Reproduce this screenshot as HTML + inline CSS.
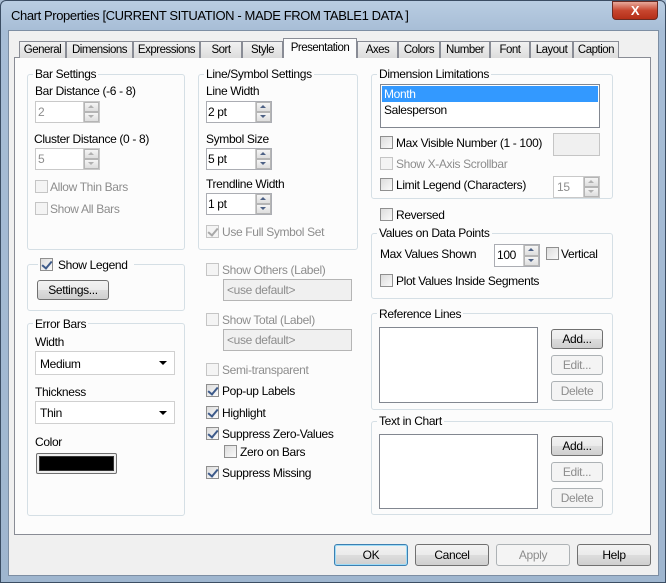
<!DOCTYPE html>
<html><head><meta charset="utf-8"><style>
*{box-sizing:border-box;margin:0;padding:0}
body{width:666px;height:583px;overflow:hidden;background:#a9bdd3;font-family:"Liberation Sans",sans-serif;font-size:12px;letter-spacing:-0.35px;color:#000;position:relative}
.a{position:absolute}
.frame{left:0;top:0;width:666px;height:583px;background:linear-gradient(180deg,#b9cde2 0,#a7bdd6 30px,#9fb6cf 100%);border:1px solid #3b4d63;border-radius:6px 6px 0 0}
.client{left:8px;top:30px;width:651px;height:546px;background:#f0f0f0;border:1px solid #7d8ea3}
.panel{left:14px;top:57px;width:637px;height:478px;background:#fcfcfc;border:1px solid #898c95}
.tab{top:41px;height:17px;background:linear-gradient(#f2f2f2,#dcdcdc);border:1px solid #898c95;border-bottom:none;font-size:11.5px;letter-spacing:-0.5px;text-align:center;line-height:16px;overflow:hidden}
.tab.act{top:38px;height:20px;background:#fcfcfc;z-index:2;line-height:18px}
.g{border:1px solid #d5dfe5;border-radius:3px}
.lg{background:#fcfcfc;padding:0 2px;line-height:12px}
.t{position:absolute;white-space:nowrap;line-height:14px}
.dis{color:#8d8d8d}
.cb{position:absolute;width:13px;height:13px;border:1px solid #8f8f8f;background:linear-gradient(135deg,#dcdcdc,#fafafa)}
.cb.d{border-color:#c5c5c5;background:#f4f4f4}
.cb.c::after{content:"";position:absolute;left:3px;top:0px;width:4px;height:8px;border:solid #3d5a8a;border-width:0 2px 2px 0;transform:rotate(40deg)}
.cb.c.d::after{border-color:#a8a8a8}
.box{position:absolute;background:#fff;border:1px solid #abadb3}
.spin{position:absolute;width:16px;right:0;top:0;bottom:0;border-left:1px solid #ccc}
.spin i{display:block;height:50%;border:1px solid #b5b5b5;background:linear-gradient(#f5f5f5,#dedede);position:relative}
.spin i::after{content:"";position:absolute;left:3px;border:3px solid transparent}
.spin i.u::after{border-bottom:3px solid #4d6185;top:-1px}
.spin i.dn::after{border-top:3px solid #4d6185;top:2px}
.spin i.ud::after{border-bottom:3px solid #b0b0b0;top:-1px}
.spin i.dd::after{border-top:3px solid #b0b0b0;top:2px}
.btn{position:absolute;border:1px solid #707070;border-radius:3px;background:linear-gradient(#f2f2f2 0,#ebebeb 50%,#dddddd 51%,#cfcfcf 100%);text-align:center;line-height:18px}
.btn.d{border-color:#adb2b5;background:#f4f4f4;color:#8d8d8d}
.combo::after{content:"";position:absolute;right:7px;top:9px;border:4px solid transparent;border-top:4px solid #000}
</style></head><body>
<div class="a frame"></div>
<div class="t" style="left:11px;top:9px;font-size:13px;letter-spacing:-0.4px">Chart Properties [CURRENT SITUATION - MADE FROM TABLE1 DATA ]</div>
<div class="a" style="left:612px;top:1px;width:46px;height:19px;border:1px solid #6b2b22;border-radius:0 0 4px 4px;background:linear-gradient(#e8a99b,#c7462f 50%,#b52f18);color:#fff;font-weight:bold;text-align:center;line-height:17px;font-size:13px">X</div>
<div class="a client"></div>
<div class="a panel"></div>
<div class="a tab" style="left:19px;width:47px">General</div>
<div class="a tab" style="left:66px;width:67px">Dimensions</div>
<div class="a tab" style="left:133px;width:67px">Expressions</div>
<div class="a tab" style="left:200px;width:42px">Sort</div>
<div class="a tab" style="left:242px;width:41px">Style</div>
<div class="a tab act" style="left:283px;width:74px">Presentation</div>
<div class="a tab" style="left:357px;width:41px">Axes</div>
<div class="a tab" style="left:398px;width:42px">Colors</div>
<div class="a tab" style="left:440px;width:50px">Number</div>
<div class="a tab" style="left:490px;width:40px">Font</div>
<div class="a tab" style="left:530px;width:43px">Layout</div>
<div class="a tab" style="left:573px;width:46px">Caption</div>

<div class="a g" style="left:27px;top:74px;width:158px;height:176px"></div>
<div class="t lg" style="left:33px;top:67px">Bar Settings</div>
<div class="t" style="left:35px;top:84px">Bar Distance (-6 - 8)</div>
<div class="box" style="left:35px;top:101px;width:65px;height:22px;border-color:#c9c9c9"><span class="t dis" style="left:2px;top:3px">2</span><div class="spin"><i class="ud"></i><i class="dd"></i></div></div>
<div class="t" style="left:34px;top:132px">Cluster Distance (0 - 8)</div>
<div class="box" style="left:35px;top:148px;width:65px;height:22px;border-color:#c9c9c9"><span class="t dis" style="left:2px;top:3px">5</span><div class="spin"><i class="ud"></i><i class="dd"></i></div></div>
<div class="cb d" style="left:35px;top:180px"></div><div class="t dis" style="left:50px;top:180px">Allow Thin Bars</div>
<div class="cb d" style="left:35px;top:202px"></div><div class="t dis" style="left:50px;top:202px">Show All Bars</div>

<div class="a g" style="left:198px;top:74px;width:160px;height:176px"></div>
<div class="t lg" style="left:204px;top:67px">Line/Symbol Settings</div>
<div class="t" style="left:206px;top:84px">Line Width</div>
<div class="box" style="left:206px;top:101px;width:66px;height:22px"><span class="t" style="left:1px;top:3px">2 pt</span><div class="spin"><i class="u"></i><i class="dn"></i></div></div>
<div class="t" style="left:206px;top:132px">Symbol Size</div>
<div class="box" style="left:206px;top:148px;width:66px;height:22px"><span class="t" style="left:1px;top:3px">5 pt</span><div class="spin"><i class="u"></i><i class="dn"></i></div></div>
<div class="t" style="left:206px;top:177px">Trendline Width</div>
<div class="box" style="left:206px;top:193px;width:66px;height:22px"><span class="t" style="left:1px;top:3px">1 pt</span><div class="spin"><i class="u"></i><i class="dn"></i></div></div>
<div class="cb c d" style="left:206px;top:225px"></div><div class="t dis" style="left:222px;top:225px">Use Full Symbol Set</div>

<div class="a g" style="left:27px;top:264px;width:158px;height:47px"></div>
<div class="t lg" style="left:38px;top:258px;padding-left:20px;padding-right:6px">Show Legend</div>
<div class="cb c" style="left:40px;top:258px"></div>
<div class="btn" style="left:37px;top:280px;width:72px;height:20px">Settings...</div>

<div class="a g" style="left:27px;top:323px;width:158px;height:193px"></div>
<div class="t lg" style="left:33px;top:317px">Error Bars</div>
<div class="t" style="left:35px;top:335px">Width</div>
<div class="box combo" style="left:35px;top:351px;width:140px;height:24px;border-color:#d0d0d0"><span class="t" style="left:4px;top:5px">Medium</span></div>
<div class="t" style="left:35px;top:385px">Thickness</div>
<div class="box combo" style="left:35px;top:401px;width:140px;height:23px;border-color:#d0d0d0"><span class="t" style="left:4px;top:4px">Thin</span></div>
<div class="t" style="left:35px;top:435px">Color</div>
<div class="a" style="left:36px;top:453px;width:81px;height:21px;border:1px solid #707070;border-radius:2px;background:#eee;padding:2px"><div style="width:100%;height:100%;background:#000;border:1px solid #333"></div></div>

<div class="cb d" style="left:206px;top:263px"></div><div class="t dis" style="left:222px;top:263px">Show Others (Label)</div>
<div class="box" style="left:223px;top:279px;width:129px;height:22px;background:#f0f0f0;border-color:#b5b5b5"><span class="t dis" style="left:3px;top:3px">&lt;use default&gt;</span></div>
<div class="cb d" style="left:206px;top:313px"></div><div class="t dis" style="left:222px;top:313px">Show Total (Label)</div>
<div class="box" style="left:223px;top:329px;width:129px;height:22px;background:#f0f0f0;border-color:#b5b5b5"><span class="t dis" style="left:3px;top:3px">&lt;use default&gt;</span></div>
<div class="cb d" style="left:206px;top:363px"></div><div class="t dis" style="left:222px;top:363px">Semi-transparent</div>
<div class="cb c" style="left:206px;top:384px"></div><div class="t" style="left:222px;top:384px">Pop-up Labels</div>
<div class="cb c" style="left:206px;top:406px"></div><div class="t" style="left:222px;top:406px">Highlight</div>
<div class="cb c" style="left:206px;top:427px"></div><div class="t" style="left:222px;top:427px">Suppress Zero-Values</div>
<div class="cb" style="left:224px;top:445px"></div><div class="t" style="left:240px;top:445px">Zero on Bars</div>
<div class="cb c" style="left:206px;top:466px"></div><div class="t" style="left:222px;top:466px">Suppress Missing</div>

<div class="a g" style="left:371px;top:74px;width:242px;height:125px"></div>
<div class="t lg" style="left:377px;top:67px">Dimension Limitations</div>
<div class="box" style="left:380px;top:84px;width:220px;height:44px;border-color:#828790"><div class="a" style="left:1px;top:1px;width:216px;height:16px;background:#3399ff;color:#fff;line-height:16px;padding-left:2px">Month</div><span class="t" style="left:3px;top:18px">Salesperson</span></div>
<div class="cb" style="left:380px;top:136px"></div><div class="t" style="left:396px;top:136px">Max Visible Number (1 - 100)</div>
<div class="box" style="left:553px;top:133px;width:47px;height:23px;background:#f0f0f0;border-color:#c5c5c5"></div>
<div class="cb d" style="left:380px;top:157px"></div><div class="t dis" style="left:396px;top:157px">Show X-Axis Scrollbar</div>
<div class="cb" style="left:380px;top:178px"></div><div class="t" style="left:396px;top:178px">Limit Legend (Characters)</div>
<div class="box" style="left:553px;top:176px;width:47px;height:22px;border-color:#c9c9c9"><span class="t dis" style="left:3px;top:3px">15</span><div class="spin"><i class="ud"></i><i class="dd"></i></div></div>

<div class="cb" style="left:380px;top:208px"></div><div class="t" style="left:396px;top:208px">Reversed</div>

<div class="a g" style="left:371px;top:233px;width:242px;height:66px"></div>
<div class="t lg" style="left:377px;top:226px">Values on Data Points</div>
<div class="t" style="left:380px;top:247px">Max Values Shown</div>
<div class="box" style="left:494px;top:244px;width:46px;height:23px"><span class="t" style="left:2px;top:3px">100</span><div class="spin"><i class="u"></i><i class="dn"></i></div></div>
<div class="cb" style="left:546px;top:247px"></div><div class="t" style="left:561px;top:247px">Vertical</div>
<div class="cb" style="left:380px;top:274px"></div><div class="t" style="left:396px;top:274px">Plot Values Inside Segments</div>

<div class="a g" style="left:371px;top:313px;width:242px;height:97px"></div>
<div class="t lg" style="left:377px;top:307px">Reference Lines</div>
<div class="box" style="left:379px;top:327px;width:159px;height:76px;border-color:#828790"></div>
<div class="btn" style="left:551px;top:329px;width:52px;height:20px">Add...</div>
<div class="btn d" style="left:551px;top:355px;width:52px;height:20px">Edit...</div>
<div class="btn d" style="left:551px;top:381px;width:52px;height:20px">Delete</div>

<div class="a g" style="left:371px;top:421px;width:242px;height:94px"></div>
<div class="t lg" style="left:377px;top:414px">Text in Chart</div>
<div class="box" style="left:379px;top:434px;width:159px;height:75px;border-color:#828790"></div>
<div class="btn" style="left:551px;top:436px;width:52px;height:20px">Add...</div>
<div class="btn d" style="left:551px;top:462px;width:52px;height:20px">Edit...</div>
<div class="btn d" style="left:551px;top:488px;width:52px;height:20px">Delete</div>

<div class="btn" style="left:334px;top:544px;width:74px;height:22px;line-height:20px;border-color:#3c7fb1;box-shadow:inset 0 0 0 1px #9fdcf7">OK</div>
<div class="btn" style="left:415px;top:544px;width:74px;height:22px;line-height:20px">Cancel</div>
<div class="btn d" style="left:496px;top:544px;width:74px;height:22px;line-height:20px">Apply</div>
<div class="btn" style="left:577px;top:544px;width:74px;height:22px;line-height:20px">Help</div>
</body></html>
